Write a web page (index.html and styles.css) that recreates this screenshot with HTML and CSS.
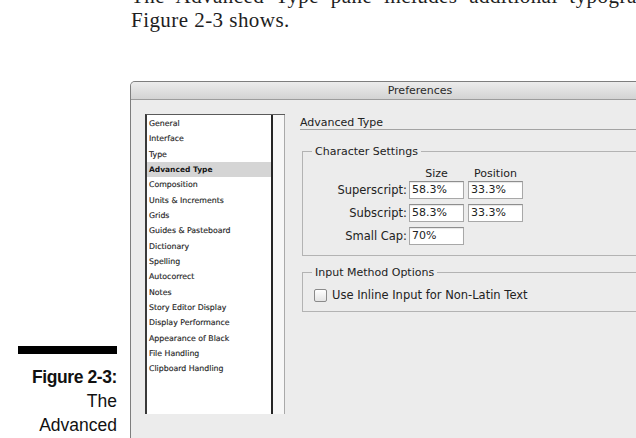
FILE: index.html
```html
<!DOCTYPE html>
<html lang="en">
<head>
<meta charset="utf-8">
<title>Advanced Type</title>
<link rel="stylesheet" href="styles.css">
</head>
<body>
<div class="page">
  <p class="lead"><span class="lead-top">The Advanced Type pane includes additional typographic controls, as</span><br>Figure 2-3 shows.</p>
  <div class="figure">
    <div class="caption">
      <div class="rule"></div>
      <div class="fig-label">Figure 2-3:</div>
      <div class="fig-text">The<br>Advanced</div>
    </div>
    <div class="window">
      <div class="titlebar">Preferences</div>
      <div class="win-body">
        <div class="pane-list">
          <ul class="list">
            <li>General</li>
            <li>Interface</li>
            <li>Type</li>
            <li class="sel">Advanced Type</li>
            <li>Composition</li>
            <li>Units &amp; Increments</li>
            <li>Grids</li>
            <li>Guides &amp; Pasteboard</li>
            <li>Dictionary</li>
            <li>Spelling</li>
            <li>Autocorrect</li>
            <li>Notes</li>
            <li>Story Editor Display</li>
            <li>Display Performance</li>
            <li>Appearance of Black</li>
            <li>File Handling</li>
            <li>Clipboard Handling</li>
          </ul>
          <div class="scroll"></div>
        </div>
        <div class="pane">
          <div class="pane-title">Advanced Type</div>
          <fieldset class="group chars">
            <legend>Character Settings</legend>
            <div class="grid">
              <span></span>
              <span class="col-head">Size</span>
              <span class="col-head">Position</span>
              <span class="label">Superscript:</span>
              <span class="field">58.3%</span>
              <span class="field">33.3%</span>
              <span class="label">Subscript:</span>
              <span class="field">58.3%</span>
              <span class="field">33.3%</span>
              <span class="label">Small Cap:</span>
              <span class="field">70%</span>
              <span></span>
            </div>
          </fieldset>
          <fieldset class="group input">
            <legend>Input Method Options</legend>
            <div class="check"><span class="box"></span>Use Inline Input for Non-Latin Text</div>
          </fieldset>
        </div>
      </div>
    </div>
  </div>
</div>
</body>
</html>
```

FILE: styles.css
```css
* { box-sizing: border-box; }

html, body {
  margin: 0;
  padding: 0;
  background: #fff;
  overflow: hidden;
}

.page {
  width: 636px;
  height: 438px;
  overflow: hidden;
}

/* body copy above the figure */
.lead {
  margin: -16px 0 0 131px;
  font: 21px/24px "Liberation Serif", "Times New Roman", serif;
  letter-spacing: 0.45px;
  color: #1e1e1e;
  white-space: nowrap;
}

.lead-top {
  word-spacing: 6px;
}

.figure {
  display: flex;
  margin-top: 49px;
}

/* figure caption column */
.caption {
  flex: 0 0 130px;
  padding: 265px 13px 0 18px;
  text-align: right;
  font-family: "Liberation Sans", Arial, sans-serif;
  font-size: 17.5px;
  line-height: 24px;
  color: #111;
}

.rule {
  height: 8px;
  background: #000;
  margin-bottom: 11px;
}

.fig-label {
  font-weight: bold;
  letter-spacing: -0.4px;
}

/* preferences dialog */
.window {
  flex: 0 0 580px;
  height: 380px;
  background: #ececec;
  border: 1px solid #7e7e7e;
  border-bottom: 0;
  border-radius: 5px 5px 0 0;
  font-family: "DejaVu Sans", "Liberation Sans", sans-serif;
  color: #222;
  overflow: hidden;
}

.titlebar {
  height: 18px;
  line-height: 17px;
  text-align: center;
  font-size: 11px;
  color: #2a2a2a;
  background: linear-gradient(#ececec, #d3d3d3);
  border-bottom: 1px solid #9c9c9c;
  border-radius: 4px 4px 0 0;
}

.win-body {
  display: flex;
  align-items: flex-start;
  padding: 14px 0 0 14px;
}

.pane-list {
  display: flex;
  flex: 0 0 auto;
  height: 300px;
  border-top: 1px solid #5a5a5a;
  border-left: 2px solid #3a3a3a;
}

.list {
  width: 126px;
  margin: 0;
  padding: 1px 0 0;
  list-style: none;
  background: #fff;
  border-right: 2px solid #262626;
}

.list li {
  height: 15.33px;
  line-height: 15.33px;
  padding-left: 2px;
  font-size: 7.8px;
  color: #262626;
  -webkit-text-stroke: 0.15px #262626;
  white-space: nowrap;
}

.list li.sel {
  background: #d5d5d5;
  font-weight: bold;
  font-size: 7.5px;
  color: #151515;
  -webkit-text-stroke: 0;
}

.scroll {
  width: 12px;
  background: #f7f7f7;
  border-right: 1px solid #a9a9a9;
}

.pane {
  flex: 1;
  min-width: 0;
  padding: 0 10px 0 15px;
}

.pane-title {
  font-size: 11px;
  line-height: 12px;
  padding-top: 3px;
  border-bottom: 1px solid #a3a3a3;
  color: #222;
}

.group {
  margin: 15px 0 0 2px;
  padding: 4px 0 10px;
  border: 1px solid #b3b3b3;
  min-width: 0;
}

.group legend {
  margin-left: 9px;
  padding: 0 3px;
  font-size: 11px;
  line-height: 13px;
  color: #222;
}

.grid {
  display: grid;
  grid-template-columns: 104px 57px 55px;
  grid-template-rows: 14px 18px 18px 18px;
  column-gap: 2px;
  row-gap: 5px;
}

.col-head {
  align-self: end;
  margin-bottom: -4px;
  width: 55px;
  font-size: 11px;
  line-height: 13px;
  text-align: center;
  white-space: nowrap;
}

.label {
  font-size: 11.5px;
  line-height: 18px;
  text-align: right;
  white-space: nowrap;
}

.field {
  width: 55px;
  height: 18px;
  padding: 0 2px;
  font-size: 11px;
  line-height: 16px;
  background: #fff;
  border: 1px solid #a8a8a8;
  border-top-color: #8e8e8e;
  box-shadow: inset 0 1px 1px rgba(0, 0, 0, 0.1);
  color: #222;
}

.group.input {
  margin-top: 10px;
  padding: 9px 0 9px;
}

.check {
  display: flex;
  align-items: center;
  gap: 5px;
  padding-left: 11px;
  height: 14px;
  font-size: 11.5px;
  white-space: nowrap;
}

.box {
  width: 13px;
  height: 13px;
  border: 1px solid #8a8a8a;
  border-radius: 2px;
  background: linear-gradient(#ffffff, #e4e4e4);
}
```
